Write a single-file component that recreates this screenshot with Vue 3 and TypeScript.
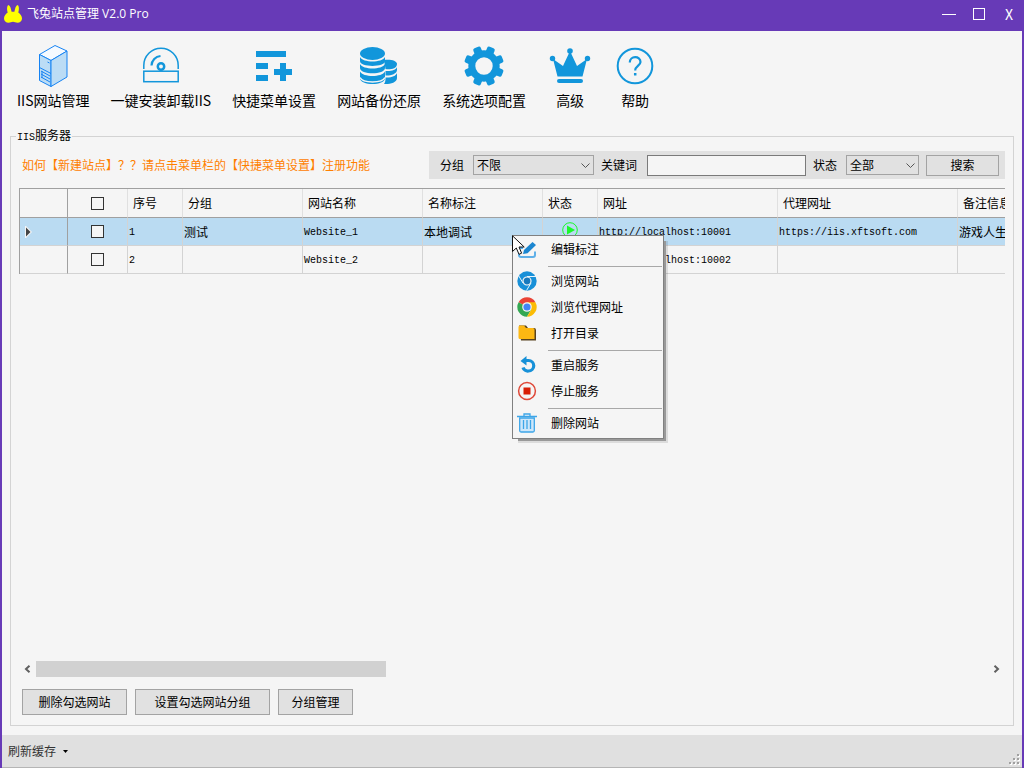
<script setup lang="ts">
import { ref } from 'vue'

interface Tool { id: string; label: string }
interface Site {
  no: number
  group: string
  name: string
  note: string
  running: boolean
  url: string
  proxy: string
  remark: string
  checked: boolean
}

const tools: Tool[] = [
  { id: 'server', label: 'IIS网站管理' },
  { id: 'disk', label: '一键安装卸载IIS' },
  { id: 'menu', label: '快捷菜单设置' },
  { id: 'backup', label: '网站备份还原' },
  { id: 'gear', label: '系统选项配置' },
  { id: 'crown', label: '高级' },
  { id: 'help', label: '帮助' },
]

const headings = ['序号', '分组', '网站名称', '名称标注', '状态', '网址', '代理网址', '备注信息']

const sites = ref<Site[]>([
  { no: 1, group: '测试', name: 'Website_1', note: '本地调试', running: true, url: 'http://localhost:10001', proxy: 'https://iis.xftsoft.com', remark: '游戏人生', checked: false },
  { no: 2, group: '', name: 'Website_2', note: '', running: false, url: 'http://localhost:10002', proxy: '', remark: '', checked: false },
])

const menuGroups: Tool[][] = [
  [{ id: 'edit', label: '编辑标注' }],
  [
    { id: 'browse', label: '浏览网站' },
    { id: 'chrome', label: '浏览代理网址' },
    { id: 'folder', label: '打开目录' },
  ],
  [
    { id: 'restart', label: '重启服务' },
    { id: 'stop', label: '停止服务' },
  ],
  [{ id: 'trash', label: '删除网站' }],
]

const group = ref('不限')
const state = ref('全部')
const keyword = ref('')
const allChecked = ref(false)
const selected = ref(0)
const visibleShare = 36.8
const teeth = [0, 1, 2, 3, 4, 5, 6, 7].map((n) => 22.5 + n * 45)

function toggleAll() {
  sites.value.forEach((s) => { s.checked = allChecked.value })
}
</script>

<template>
  <div class="window">
    <header class="titlebar">
      <svg class="logo" viewBox="0 0 18 18" aria-hidden="true">
        <path fill="#ffff00" d="M4.200 0C6.200.5 7 3.500 7.600 6.800H10.400C11 3.500 11.800.5 13.800 0C15.600 2 14.800 5.500 14.300 7.500C16.500 9 18 11 18 13.500C18 16 16 17.800 13.500 17.800C11.500 17.800 10.500 16.800 9 16.800C7.500 16.800 6.500 17.800 4.500 17.800C2 17.800 0 16 0 13.500C0 11 1.500 9 3.700 7.500C3.200 5.500 2.400 2 4.200 0Z" />
      </svg>
      <h1>飞兔站点管理 V2.0 Pro</h1>
      <button type="button" aria-label="最小化"><svg width="14" height="14"><path d="M0 7.500H14" stroke="#fff" /></svg></button>
      <button type="button" aria-label="最大化"><svg width="12" height="12"><rect x=".5" y=".5" width="11" height="11" fill="none" stroke="#fff" /></svg></button>
      <button type="button" aria-label="关闭">X</button>
    </header>

    <main class="body">
      <nav class="toolbar">
        <button v-for="t in tools" :key="t.id" type="button" :class="['tool', t.id]">
          <svg viewBox="0 0 42 42" width="42" height="42" aria-hidden="true">
            <g v-if="t.id === 'server'" stroke="#1683f3" stroke-width="1" stroke-linejoin="round">
              <path fill="#f6faff" d="M23 .5L35 6L19 15.500L7.500 9.500Z" />
              <path fill="#bbdcf5" d="M7.500 9.500L19 15.500V41.500L7.500 35.500Z" />
              <path fill="#bbdcf5" d="M35 6V32L19 41.500V15.500Z" />
              <path fill="none" d="M7.500 22.500L19 28.500M9 26L18 31M9 29L18 34M9 32L18 37M10 26V33M15.500 17L17.500 18" />
            </g>
            <g v-else-if="t.id === 'disk'" fill="none" stroke="#1296db" stroke-width="1.500">
              <path d="M3.800 24V20.500A17.200 17.200 0 0 1 38.200 20.500V24" />
              <path d="M11.500 20.500A10 10 0 0 1 20.500 11" stroke-width="2.200" />
              <circle cx="21" cy="21.500" r="3.200" stroke-width="2.500" />
              <rect x="3.800" y="26.200" width="34.400" height="10.500" />
            </g>
            <path v-else-if="t.id === 'menu'" fill="#1296db" d="M3 6H33V12H3ZM3 18H15V24H3ZM3 30H15V36H3ZM27 18H33V24H39V30H33V36H27V30H21V24H27Z" />
            <g v-else-if="t.id === 'backup'" fill="#1296db">
              <path d="M26 15C31 14 39 15 39 19C39 24 31 25 27.500 24Z" />
              <path d="M27.500 26C33 26.500 38 25 39 22V25C39 29 32 31 27.500 30.500Z" />
              <path d="M27.500 32.500C33 33 38 31 39 28V33C39 38 31 39.500 26 39C27.500 37 27.500 35 27.500 32.500Z" />
              <ellipse cx="14.500" cy="8.500" rx="12.500" ry="6.500" />
              <path d="M2 12C5 18 24 18 27 12V16C27 22.500 2 22.500 2 16Z" />
              <path d="M2 19C5 25 24 25 27 19V23C27 30 2 30 2 23Z" />
              <path d="M2 26.500C5 32.500 24 32.500 27 26.500V33C27 41 2 41 2 33Z" />
              <path d="M2 27C5 33 24 33 27 27" transform="translate(0 5.500)" fill="none" stroke="#f5f5f5" stroke-width="1.500" />
            </g>
            <g v-else-if="t.id === 'gear'">
              <rect v-for="a in teeth" :key="a" x="17" y="1" width="8" height="9" rx="2" fill="#1296db" :transform="`rotate(${a} 21 21)`" />
              <circle cx="21" cy="21" r="12.200" fill="none" stroke="#1296db" stroke-width="7" />
            </g>
            <g v-else-if="t.id === 'crown'" fill="#1296db">
              <circle cx="21" cy="6" r="2.800" /><circle cx="3.500" cy="13.500" r="2.700" /><circle cx="38.500" cy="13.500" r="2.700" />
              <path d="M21 6L28 21L38 14L33.500 31.500H8.500L4 14L14 21Z" />
              <rect x="8" y="34" width="26" height="4" rx="2" />
            </g>
            <g v-else fill="none" stroke="#1296db">
              <circle cx="21" cy="21" r="17.300" stroke-width="2" />
              <path d="M15.800 17.500C15.800 10.500 26.500 10.500 26.500 17C26.500 20.500 21.200 20.800 21.200 25.500" stroke-width="2.200" />
              <path d="M21.200 28V30.500" stroke-width="2.500" />
            </g>
          </svg>
          <span>{{ t.label }}</span>
        </button>
      </nav>

      <section class="panel" aria-labelledby="panel-title">
        <h2 id="panel-title"><span class="mono">IIS</span>服务器</h2>

        <div class="top">
          <p class="tip">如何【新建站点】？？请点击菜单栏的【快捷菜单设置】注册功能</p>
          <form class="search" @submit.prevent>
            <label for="group">分组</label>
            <span class="pick group">
              <select id="group" v-model="group"><option>不限</option><option>测试</option></select>
              <svg width="9" height="6"><path d="M.5 .5L4.500 4.500L8.500 .5" fill="none" stroke="#555" /></svg>
            </span>
            <label for="keyword">关键词</label>
            <input id="keyword" v-model="keyword" type="text">
            <label for="state">状态</label>
            <span class="pick state">
              <select id="state" v-model="state"><option>全部</option><option>启动</option></select>
              <svg width="9" height="6"><path d="M.5 .5L4.500 4.500L8.500 .5" fill="none" stroke="#555" /></svg>
            </span>
            <button type="submit" class="btn">搜索</button>
          </form>
        </div>

        <div class="grid">
          <table>
            <colgroup>
              <col class="w48"><col class="w60"><col class="w55"><col class="w120"><col class="w120">
              <col class="w120"><col class="w55"><col class="w180"><col class="w180"><col class="w120">
            </colgroup>
            <thead>
              <tr>
                <th class="rowhead" aria-label="当前行"></th>
                <th class="tick"><input v-model="allChecked" type="checkbox" aria-label="全选" @change="toggleAll"></th>
                <th v-for="h in headings" :key="h" scope="col">{{ h }}</th>
              </tr>
            </thead>
            <tbody>
              <tr v-for="(s, i) in sites" :key="s.no" :class="{ current: selected === i }" @click="selected = i">
                <td class="rowhead">
                  <svg v-if="selected === i" width="8" height="12"><path d="M0 0H1L7 6L1 12H0Z" fill="#f5f5f5" /><path d="M1 1.500L5.500 6L1 10.500Z" fill="#444" /></svg>
                </td>
                <td class="tick"><input v-model="s.checked" type="checkbox" :aria-label="s.name"></td>
                <td class="mono">{{ s.no }}</td>
                <td>{{ s.group }}</td>
                <td class="mono">{{ s.name }}</td>
                <td>{{ s.note }}</td>
                <td class="tick">
                  <svg v-if="s.running" width="16" height="16"><circle cx="8" cy="8" r="7.300" fill="none" stroke="#1afa29" /><path d="M5 3.500L13 8L5 12.500Z" fill="#1afa29" /></svg>
                </td>
                <td class="mono">{{ s.url }}</td>
                <td class="mono">{{ s.proxy }}</td>
                <td>{{ s.remark }}</td>
              </tr>
            </tbody>
          </table>
        </div>

        <div class="scroll">
          <button type="button" aria-label="向左滚动"><svg width="7" height="8"><path d="M5.500 .8L2 4L5.500 7.200" fill="none" stroke="#606060" stroke-width="2" /></svg></button>
          <div class="track"><div class="thumb" :style="{ width: visibleShare + '%' }"></div></div>
          <button type="button" aria-label="向右滚动"><svg width="7" height="8"><path d="M1.500 .8L5 4L1.500 7.200" fill="none" stroke="#606060" stroke-width="2" /></svg></button>
        </div>

        <div class="actions">
          <button type="button" class="btn">删除勾选网站</button>
          <button type="button" class="btn wide">设置勾选网站分组</button>
          <button type="button" class="btn narrow">分组管理</button>
        </div>
      </section>

      <footer class="status">
        <button type="button">刷新缓存 <svg width="5" height="3"><path d="M0 0H5L2.500 3Z" fill="#000" /></svg></button>
        <svg class="grip" width="12" height="12" aria-hidden="true">
          <path fill="#fff" d="M10 2h2v2h-2zM6 6h2v2H6zM10 6h2v2h-2zM2 10h2v2H2zM6 10h2v2H6zM10 10h2v2h-2z" />
          <path fill="#a0a0a0" d="M9 1h2v2H9zM5 5h2v2H5zM9 5h2v2H9zM1 9h2v2H1zM5 9h2v2H5zM9 9h2v2H9z" />
        </svg>
      </footer>
    </main>

    <div class="context" role="menu">
      <div v-for="(g, gi) in menuGroups" :key="gi" class="section">
        <button v-for="m in g" :key="m.id" type="button" role="menuitem">
          <svg viewBox="0 0 20 20" width="20" height="20" aria-hidden="true">
            <g v-if="m.id === 'edit'">
              <path d="M6 9H3.500Q2 9 2 10.500V16Q2 18 4 18H16Q18 18 18 16V12.500" fill="none" stroke="#5fb0e8" stroke-width="2" />
              <path d="M6 15L7 11L15.500 3L19 6L10.500 14.200Z" fill="#1b86d0" />
            </g>
            <g v-else-if="m.id === 'browse'">
              <circle cx="10" cy="10" r="9.700" fill="#1890d8" />
              <circle cx="10" cy="10" r="4" fill="#1779bd" stroke="#f5f5f5" stroke-width="1.200" />
              <path d="M10 5.500H19M6 12L1.800 5M14 12L9.500 19.500" stroke="#e6f4fc" fill="none" />
            </g>
            <g v-else-if="m.id === 'chrome'">
              <path d="M10 10L1.600 5.150A9.700 9.700 0 0 1 18.400 5.150Z" fill="#ea4335" />
              <path d="M10 10L1.600 5.150A9.700 9.700 0 0 0 10 19.700L14.500 12Z" fill="#34a853" />
              <path d="M10 5.150H18.400A9.700 9.700 0 0 1 10 19.700L14.300 12.500Z" fill="#fbbc05" />
              <circle cx="10" cy="10" r="4.800" fill="#f5f5f5" /><circle cx="10" cy="10" r="3.600" fill="#4285f4" />
            </g>
            <g v-else-if="m.id === 'folder'">
              <path d="M2 2.500H9L11 5H17Q19 5 19 7V17.500H4Z" fill="#59431e" />
              <path d="M1.500 4Q1.500 2.500 3 2.500H7L9 5H16Q17.500 5 17.500 6.500V16H3Q1.500 16 1.500 14.500Z" fill="#fdb813" />
            </g>
            <g v-else-if="m.id === 'restart'">
              <path d="M7 5.500H11.500A5 5 0 0 1 11.500 16A5 5 0 0 1 6 12.500" fill="none" stroke="#1791d8" stroke-width="3.200" />
              <path d="M3.500 6L9.500 1V10.500Z" fill="#1791d8" />
            </g>
            <g v-else-if="m.id === 'stop'">
              <circle cx="10" cy="10" r="8.400" fill="none" stroke="#df4838" stroke-width="1.500" /><rect x="6.500" y="6.500" width="7" height="7" fill="#d81e06" />
            </g>
            <g v-else fill="none" stroke="#3ca5e8" stroke-width="1.300">
              <path d="M0 3.500H20M7 3V1H13V3" /><path d="M2.700 5V17.500Q2.700 19 4 19H16Q17.300 19 17.300 17.500V5Z" fill="#cee7fa" />
              <path d="M6.500 7V16M10 7V16M13.500 7V16" />
            </g>
          </svg>
          <span>{{ m.label }}</span>
        </button>
      </div>
    </div>

    <svg class="pointer" width="14" height="21" viewBox="0 0 14 21" aria-hidden="true">
      <path d="M.5 .8V16.500L4.300 13L7 19.300L9.600 18.200L7 12H12.200Z" fill="#fff" stroke="#111" />
    </svg>
  </div>
</template>

<style>
html, body, #app { height: 100%; }
body { margin: 0; }
</style>

<style scoped>
* { box-sizing: border-box; }
button, input, select { font: inherit; color: inherit; margin: 0; border-radius: 0; }
button { padding: 0; border: 0; background: none; }
svg { display: block; flex: none; }

.window {
  position: relative;
  min-height: 100%;
  display: flex;
  flex-direction: column;
  overflow: hidden;
  background: #f5f5f5;
  color: #000;
  font: 12px/16px "Noto Sans CJK SC", sans-serif;
  text-spacing-trim: space-all;
}
.mono { font-family: "Liberation Mono", "Noto Sans CJK SC", monospace; font-size: 10px; }

.titlebar { height: 31px; display: flex; align-items: center; background: #673ab7; color: #fff; padding-bottom: 3px; }
.logo { width: 18px; height: 18px; margin: 0 5px 0 4px; }
.titlebar h1 { flex: 1; margin: 0; font-family: "Open Sans", "Noto Sans CJK SC", sans-serif; font-size: 12px; font-weight: 400; }
.titlebar button { width: 30px; height: 28px; display: flex; align-items: center; justify-content: center; font-size: 14px; }

.body { flex: 1; display: flex; flex-direction: column; min-width: 0; border: solid #673ab7; border-width: 0 2px; }
.toolbar { display: flex; gap: 21px; padding: 14px 15px 27px; }
.tool { display: flex; flex-direction: column; align-items: center; gap: 4px; font-size: 14px; line-height: 18px; white-space: nowrap; }
.tool.crown { width: 46px; }

.panel { flex: 1; min-width: 0; margin: 0 8px 9px; padding: 0 8px 10px; border: 1px solid #d3d3d3; display: flex; flex-direction: column; }
.panel h2 { align-self: flex-start; height: 16px; margin: -10px 0 8px -3px; padding: 0 1px; background: #f5f5f5; font-size: 12px; font-weight: 400; }
.top { display: flex; justify-content: space-between; align-items: center; }
.tip { margin: 0 0 0 3px; color: #ff8000; white-space: nowrap; }
.search { display: flex; align-items: center; height: 28px; padding: 0 6px 0 11px; background: #e1e1e1; white-space: nowrap; }
.pick { position: relative; margin: 0 7px 0 9px; }
.pick svg { position: absolute; right: 4px; top: 8px; pointer-events: none; }
.pick select { display: block; width: 100%; height: 20px; padding: 0 3px; border: 1px solid #a3a3a3; background: #e1e1e1; appearance: none; line-height: 16px; }
.pick.group { width: 121px; }
.pick.state { width: 73px; }
.search input { width: 159px; height: 21px; margin: 0 7px 0 10px; padding: 0 3px; border: 1px solid #7a7a7a; background: #f5f5f5; }
.btn { width: 105px; height: 26px; border: 1px solid #a3a3a3; background: #e1e1e1; text-align: center; }
.search .btn { width: 73px; height: 21px; line-height: 16px; }
.btn.wide { width: 135px; }
.btn.narrow { width: 75px; }

.grid { flex: 1; margin-top: 9px; overflow: hidden; }
table { width: 1059px; table-layout: fixed; border-spacing: 0; border: solid #a0a0a0; border-width: 1px 0 0 1px; }
.w48 { width: 48px; }
.w55 { width: 55px; }
.w60 { width: 60px; }
.w120 { width: 120px; }
.w180 { width: 180px; }
th, td { height: 28px; padding: 0 1px; border: solid #d3d3d3; border-width: 0 1px 1px 0; text-align: left; font-weight: 400; white-space: nowrap; vertical-align: middle; line-height: 16px; }
th { height: 29px; padding: 0 5px; border-color: #e0e0e0; border-bottom-color: #a0a0a0; }
td.mono { padding-top: 2px; }
.rowhead { padding-left: 5px; border-right-color: #a0a0a0; }
.tick { padding: 0; text-align: center; }
.tick svg { margin: -3px auto 0; }
.current td { background: #badbf2; }
input[type="checkbox"] { display: block; width: 13px; height: 13px; margin: 0 auto; appearance: none; border: 1px solid #333; background: #f5f5f5; }
input[type="checkbox"]:checked { background: #333; }

.scroll { display: flex; height: 16px; }
.scroll button { width: 17px; display: flex; align-items: center; justify-content: center; }
.track { flex: 1; }
.thumb { height: 16px; background: #d1d1d1; }
.actions { display: flex; gap: 8px; margin: 12px 0 0 3px; }

.status { display: flex; align-items: center; justify-content: space-between; height: 33px; padding: 0 1px 0 6px; background: #e0e0e0; border-bottom: 1px solid #b5b5b5; color: #333; }
.status button { display: flex; align-items: center; gap: 7px; }
.grip { align-self: flex-end; margin: 0 1px 2px 0; }

.context { position: absolute; left: 512px; top: 235px; width: 152px; padding: 0 1px 2px; border: 1px solid #808080; background: #f5f5f5; box-shadow: 4px 4px 0 -2px #999, 5px 5px 0 -1px rgba(0, 0, 0, .1); }
.context button { width: 100%; height: 26px; display: flex; align-items: center; gap: 14px; padding-left: 3px; text-align: left; }
.section + .section::before { content: ""; display: block; height: 1px; margin: 4px 0 1px 34px; background: #a8a8a8; }
.pointer { position: absolute; left: 512px; top: 235px; pointer-events: none; }
</style>
